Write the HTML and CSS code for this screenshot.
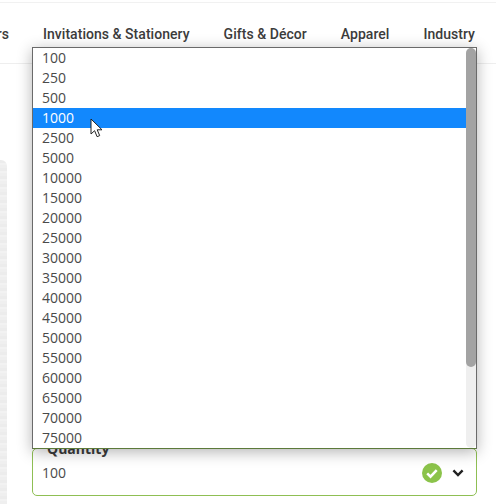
FILE: index.html
```html
<!DOCTYPE html>
<html lang="en">
<head>
<meta charset="utf-8">
<title>Quantity</title>
<link rel="stylesheet" href="styles.css">
</head>
<body>
<div class="page">
  <nav class="nav">
    <a>Stickers</a>
    <a>Invitations &amp; Stationery</a>
    <a>Gifts &amp; Décor</a>
    <a>Apparel</a>
    <a>Industry</a>
  </nav>
  <main class="main">
    <div class="preview"></div>
    <form class="form">
      <div class="field">
        <span class="field-label">Quantity</span>
        <span class="field-value">100</span>
        <svg class="check" width="20" height="20" viewBox="0 0 20 20"><circle cx="10" cy="10" r="10" fill="#8bc34a"/><path d="M5.2 10.4l3.3 3.2 6.2-6.4" fill="none" stroke="#fff" stroke-width="2.6"/></svg>
        <svg class="chev" width="12" height="8" viewBox="0 0 12 8"><path d="M1.4 1.4L6 6l4.6-4.6" fill="none" stroke="#222" stroke-width="2.4"/></svg>
      </div>
    </form>
  </main>
  <div class="dropdown">
    <ul class="options">
      <li>100</li><li>250</li><li>500</li><li class="selected">1000</li><li>2500</li><li>5000</li><li>10000</li><li>15000</li><li>20000</li><li>25000</li><li>30000</li><li>35000</li><li>40000</li><li>45000</li><li>50000</li><li>55000</li><li>60000</li><li>65000</li><li>70000</li><li>75000</li>
    </ul>
    <div class="scrollbar"><div class="thumb"></div></div>
  </div>
  <svg class="cursor" width="15" height="20" viewBox="0 0 15 20"><path d="M1 1v15l3.6-3.3 2.5 6 2.6-1.1-2.5-5.8h4.8z" fill="#fff" stroke="#222" stroke-width="1"/></svg>
</div>
</body>
</html>
```
FILE: styles.css
```css
* { box-sizing: border-box; }
html, body { margin: 0; padding: 0; background: #fff; }
.page {
  position: relative;
  width: 496px;
  height: 504px;
  overflow: hidden;
  padding-top: 2px;
}
.nav {
  display: flex;
  justify-content: flex-end;
  gap: 34px;
  height: 62px;
  padding: 21px 21px 0 0;
  border-top: 1px solid #f1f1f1;
  border-bottom: 1px solid #eeeeee;
  font: 500 14px/20px Roboto, sans-serif;
  letter-spacing: .04px;
  color: #3c3c3c;
  white-space: nowrap;
}
.nav a { flex: none; }
.main {
  display: flex;
  height: 440px;
}
.preview {
  flex: none;
  width: 7px;
  margin-top: 96px;
  border-top-right-radius: 6px;
  background: repeating-linear-gradient(180deg, #ececec 0 3px, #f2f2f2 3px 5px, #efefef 5px 8px);
}
.form {
  flex: 1;
  padding: 384px 19px 0 25px;
}
.field {
  display: flex;
  align-items: center;
  position: relative;
  height: 48px;
  padding: 2px 12px 0 9px;
  border: 1px solid #8fbf54;
  border-radius: 5px;
  font: 14px/20px "Open Sans", sans-serif;
  color: #4a4a4a;
}
.field-label {
  position: absolute;
  left: 9px;
  top: -10px;
  padding: 0 5px;
  background: #fff;
  font-weight: 700;
  color: #3c3c3c;
}
.field-value { flex: 1; }
.check { flex: none; margin-right: 10px; }
.chev { flex: none; }
.dropdown {
  position: absolute;
  left: 32px;
  top: 47px;
  width: 445px;
  height: 402px;
  display: flex;
  background: #fff;
  border: 1px solid #6a6a6a;
  border-bottom-color: #5c7a3a;
  box-shadow: 0 3px 14px rgba(0, 0, 0, .3);
  overflow: hidden;
}
.options {
  flex: 1;
  margin: 0;
  padding: 0;
  list-style: none;
  font: 14px/20px "Open Sans", sans-serif;
  color: #4a4a4a;
}
.options li { height: 20px; padding-left: 9px; }
.options .selected { background: #1288fd; color: #fff; }
.scrollbar {
  flex: none;
  width: 10px;
  background: #efefef;
  border-radius: 5px;
}
.thumb {
  height: 319px;
  background: #a3a3a3;
  border-radius: 5px;
}
.cursor {
  position: absolute;
  left: 90px;
  top: 118px;
}
```
